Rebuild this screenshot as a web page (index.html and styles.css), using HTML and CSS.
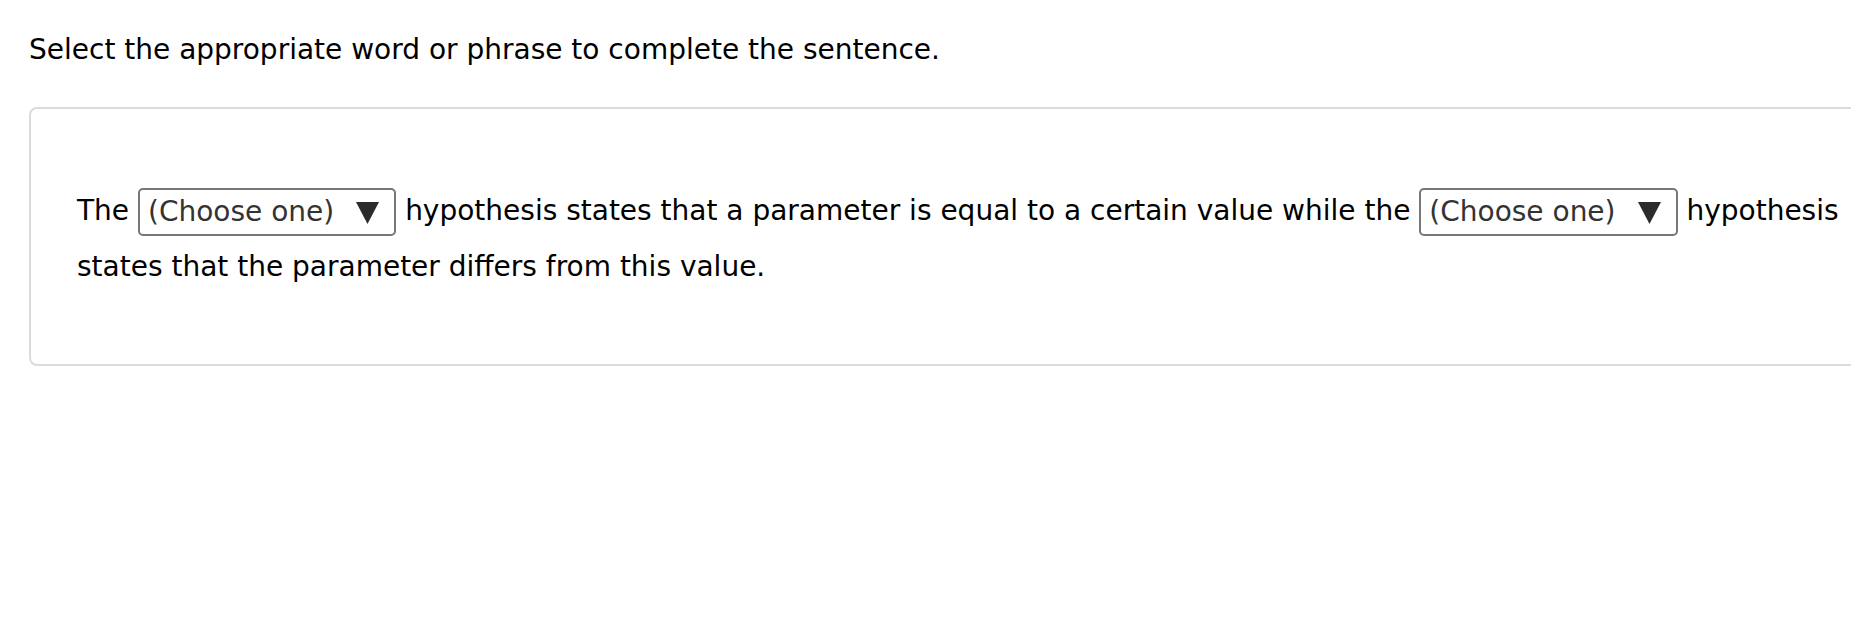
FILE: index.html
```html
<!DOCTYPE html>
<html lang="en">
<head>
<meta charset="utf-8">
<title>Select the appropriate word</title>
<link rel="stylesheet" href="styles.css">
</head>
<body>
<main class="page">
  <p class="prompt">Select the appropriate word or phrase to complete the sentence.</p>
  <section class="card">
    <p class="sentence"><span>The</span> <span class="choice"><span class="choice-label">(Choose one)</span><svg class="caret" viewBox="0 0 24 24" width="23" height="23" aria-hidden="true"><path d="M0 1H24L12 24Z" fill="#2b2b2b"/></svg></span> <span>hypothesis states that a parameter is equal to a certain value while the</span> <span class="choice"><span class="choice-label">(Choose one)</span><svg class="caret" viewBox="0 0 24 24" width="23" height="23" aria-hidden="true"><path d="M0 1H24L12 24Z" fill="#2b2b2b"/></svg></span> <span>hypothesis</span> <span>states that the parameter differs from this value.</span></p>
  </section>
</main>
</body>
</html>
```
FILE: styles.css
```css
html, body {
  margin: 0;
  padding: 0;
  background: #fff;
  overflow: hidden;
}

.page {
  padding: 0 0 0 29px;
  font-family: Verdana, "DejaVu Sans", sans-serif;
  color: #000;
}

.prompt {
  margin: 0;
  padding-top: 32px;
  font-size: 28px;
  line-height: 36px;
}

.card {
  margin-top: 39px;
  width: 1900px;
  box-sizing: border-box;
  border: 2px solid #d7dce0;
  border-radius: 8px;
  padding: 74px 40px 69px 46px;
}

.sentence {
  margin: 0;
  font-size: 28px;
  line-height: 56px;
}

.choice {
  display: inline-flex;
  align-items: center;
  gap: 22px;
  height: 48px;
  box-sizing: border-box;
  padding: 0 15px 0 8px;
  border: 2px solid #777;
  border-radius: 5px;
  color: #333;
  vertical-align: middle;
  line-height: 1;
}

.caret {
  display: block;
}
```
